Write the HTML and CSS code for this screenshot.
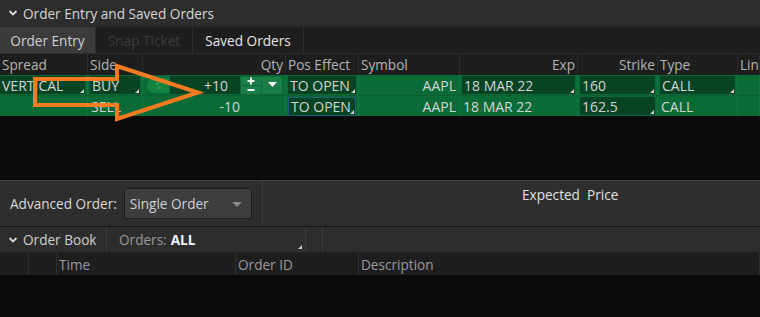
FILE: index.html
```html
<html>
    <head>
        <title>Order Entry</title>
        <meta name="viewport" content="initial-scale=1.0">
        <link rel="stylesheet" href="styles.css">
    </head>
    <body>
        <div class="titlebar">
            <svg class="chev" width="10" height="8" viewBox="0 0 10 8"><polyline points="1.5,2 5,5.5 8.5,2" fill="none" stroke="#d8d8d8" stroke-width="1.8"/></svg>
            <span>Order Entry and Saved Orders</span>
        </div>
        <div class="tabs">
            <div class="tab active">Order Entry</div>
            <div class="tab disabled">Snap Ticket</div>
            <div class="tab">Saved Orders</div>
        </div>
        <div class="grid head">
            <div class="hc">Spread</div>
            <div class="hc">Side</div>
            <div class="hc right">Qty</div>
            <div class="hc">Pos Effect</div>
            <div class="hc">Symbol</div>
            <div class="hc right">Exp</div>
            <div class="hc right">Strike</div>
            <div class="hc">Type</div>
            <div class="hc">Lin</div>
        </div>
        <div class="grid row first">
            <div class="c"><div class="field">VERTICAL</div></div>
            <div class="c"><div class="field">BUY</div></div>
            <div class="c qtycell">
                <div class="grip"><span class="dot top"></span><span class="dot"></span><span class="dot"></span></div>
                <div class="qtyfield">+10</div>
                <svg class="spin" width="20" height="17" viewBox="0 0 20 17">
                    <rect x="0" y="0" width="20" height="8" fill="#1a7d47"/>
                    <rect x="0" y="9" width="20" height="8" fill="#1a7d47"/>
                    <rect x="6.5" y="3" width="7" height="2" fill="#f2f2f2"/>
                    <rect x="9" y="0.5" width="2" height="7" fill="#f2f2f2"/>
                    <rect x="6.5" y="12" width="7" height="2" fill="#f2f2f2"/>
                </svg>
                <div class="drop"><svg width="9" height="6" viewBox="0 0 9 6"><polygon points="0,0 9,0 4.5,5" fill="#f2f2f2"/></svg></div>
            </div>
            <div class="c"><div class="field">TO OPEN</div></div>
            <div class="c right plain">AAPL</div>
            <div class="c"><div class="field">18 MAR 22</div></div>
            <div class="c"><div class="field">160</div></div>
            <div class="c"><div class="field">CALL</div></div>
            <div class="c"></div>
        </div>
        <div class="grid row">
            <div class="c"></div>
            <div class="c plain">SELL</div>
            <div class="c plain qty2">-10</div>
            <div class="c"><div class="field focus">TO OPEN</div></div>
            <div class="c right plain">AAPL</div>
            <div class="c plain">18 MAR 22</div>
            <div class="c"><div class="field">162.5</div></div>
            <div class="c plain">CALL</div>
            <div class="c"></div>
        </div>
        <div class="empty"></div>
        <div class="advbar">
            <div class="advleft">
                <span>Advanced Order:</span>
                <div class="select">Single Order <span class="caret"></span></div>
            </div>
            <div class="advright">Expected&nbsp; Price</div>
        </div>
        <div class="bookbar">
            <div class="bookttl">
                <svg class="chev" width="10" height="8" viewBox="0 0 10 8"><polyline points="1.5,2 5,5.5 8.5,2" fill="none" stroke="#d8d8d8" stroke-width="1.8"/></svg>
                <span>Order Book</span>
            </div>
            <div class="orders">Orders: <b>ALL</b></div>
            <div class="bsep"></div>
        </div>
        <div class="bookhead">
            <div class="bh"></div>
            <div class="bh"></div>
            <div class="bh">Time</div>
            <div class="bh">Order ID</div>
            <div class="bh">Description</div>
        </div>
        <div class="bookbody"></div>

        <!-- annotation arrow drawn over the grid -->
        <svg class="arrow" width="210" height="130" viewBox="0 0 210 130">
            <polygon points="35,79 117,79 117,66 198,92.5 117,119 117,105 35,105" fill="none" stroke="#f47b20" stroke-width="4" stroke-linejoin="miter"/>
        </svg>
    </body>
</html>
```
FILE: styles.css
```css
body {
    margin: 0;
    background-color: #0b0b0b;
    font-family: "Open Sans", "Liberation Sans", sans-serif;
    font-size: 13.6px;
    color: #c9c9c9;
    width: 760px;
    height: 317px;
    overflow: hidden;
    position: relative;
}
.titlebar {
    height: 26px;
    background-color: #2d2d2d;
    display: flex;
    align-items: center;
    padding-left: 8px;
    color: #d6d6d6;
    border-bottom: 1px solid #262626;
}
.chev {
    margin-right: 5px;
}
.tabs {
    height: 26px;
    background-color: #1e1e1e;
    display: flex;
}
.tab {
    width: 96px;
    display: flex;
    align-items: center;
    justify-content: center;
    border-right: 1px solid #2c2c2c;
    color: #e6e6e6;
}
.tab.active {
    background-color: #3b3b3b;
    color: #cfcfcf;
    width: 95px;
}
.tab.disabled {
    color: #3b3b3b;
}
.tab:last-child {
    width: 110px;
}
.grid {
    display: grid;
    grid-template-columns: 88px 55px 143px 73px 101px 118px 80px 80px 1fr;
}
.head {
    height: 21px;
    background-color: #1e1e1e;
    border-top: 1px solid #2e2e2e;
}
.hc {
    border-right: 1px solid #2c2c2c;
    display: flex;
    align-items: center;
    padding: 0 2px;
    color: #b4b4b4;
    white-space: nowrap;
    overflow: hidden;
}
.right {
    justify-content: flex-end;
}
.row {
    height: 20px;
    background-color: #0a6b37;
    color: #d4d4d4;
    font-size: 14px;
}
.row.first {
    border-bottom: 1px solid #0c5f31;
}
.c {
    border-right: 1px solid #127842;
    display: flex;
    align-items: center;
    padding: 0 2px;
    white-space: nowrap;
    overflow: hidden;
}
.c:first-child {
    padding-left: 0;
}
.plain {
    padding: 0 3px;
}
.field {
    flex: 1;
    height: 18px;
    background-color: #074424;
    display: flex;
    align-items: center;
    padding-left: 2px;
    position: relative;
}
.field::after {
    content: "";
    position: absolute;
    right: 1px;
    bottom: 1px;
    border-left: 4px solid transparent;
    border-bottom: 4px solid #cfcfcf;
}
.field.focus {
    border: 1px solid #1d5d7a;
    height: 17px;
}
.qtycell {
    padding: 0 2px 0 4px;
    gap: 1px;
}
.grip {
    width: 22px;
    height: 15px;
    background-color: #14823f;
    border-radius: 7px 0 0 7px;
    position: relative;
}
.dot {
    position: absolute;
    width: 3px;
    height: 3px;
    border-radius: 50%;
    background-color: #2c9c58;
    left: 7px;
    top: 8px;
}
.dot + .dot {
    left: 11px;
}
.dot.top {
    left: 9px;
    top: 4px;
}
.qtyfield {
    width: 70px;
    height: 18px;
    background-color: #074424;
    display: flex;
    align-items: center;
    justify-content: flex-end;
    padding-right: 12px;
    box-sizing: border-box;
}
.drop {
    width: 20px;
    height: 17px;
    background-color: #1a7d47;
    display: flex;
    align-items: center;
    justify-content: center;
}
.qty2 {
    justify-content: flex-end;
    padding-right: 45px;
}
.empty {
    height: 64px;
    background-color: #0b0b0b;
}
.advbar {
    height: 45px;
    background-color: #2e2e2e;
    border-top: 1px solid #3f3f3f;
    border-bottom: 1px solid #121212;
    display: flex;
}
.advleft {
    width: 263px;
    display: flex;
    align-items: center;
    padding-left: 10px;
    gap: 7px;
    box-sizing: border-box;
    border-right: 1px solid #3c3c3c;
    color: #d8d8d8;
}
.select {
    width: 128px;
    height: 31px;
    background-color: #3d3d3d;
    border: 1px solid #1c1c1c;
    border-radius: 2px;
    display: flex;
    align-items: center;
    padding-left: 5px;
    box-sizing: border-box;
    position: relative;
    color: #d0d0d0;
}
.caret {
    position: absolute;
    right: 9px;
    top: 13px;
    border-left: 5px solid transparent;
    border-right: 5px solid transparent;
    border-top: 5px solid #8a8a8a;
}
.advright {
    flex: 1;
    padding: 4px 0 0 259px;
    color: #e0e0e0;
}
.bookbar {
    height: 25px;
    background-color: #2d2d2d;
    display: flex;
    align-items: center;
    border-bottom: 1px solid #222;
}
.bookttl {
    width: 107px;
    padding-left: 8px;
    display: flex;
    align-items: center;
    border-right: 1px solid #3c3c3c;
    height: 100%;
    box-sizing: border-box;
    color: #d0d0d0;
}
.orders {
    width: 199px;
    height: 100%;
    padding-left: 12px;
    box-sizing: border-box;
    display: flex;
    align-items: center;
    gap: 4px;
    color: #9a9a9a;
    position: relative;
    border-right: 1px solid #3c3c3c;
}
.orders b {
    color: #f2f2f2;
}
.orders::after {
    content: "";
    position: absolute;
    right: 3px;
    bottom: 3px;
    border-left: 4px solid transparent;
    border-bottom: 4px solid #cfcfcf;
}
.bsep {
    width: 16px;
    height: 100%;
    border-right: 1px solid #3c3c3c;
}
.bookhead {
    height: 22px;
    background-color: #1e1e1e;
    display: grid;
    grid-template-columns: 29px 28px 179px 123px 1fr;
}
.bh {
    border-right: 1px solid #2f2f2f;
    display: flex;
    align-items: center;
    padding-left: 2px;
    color: #9a9aa2;
}
.bookbody {
    height: 42px;
}
.arrow {
    position: absolute;
    left: 0;
    top: 0;
}
```
